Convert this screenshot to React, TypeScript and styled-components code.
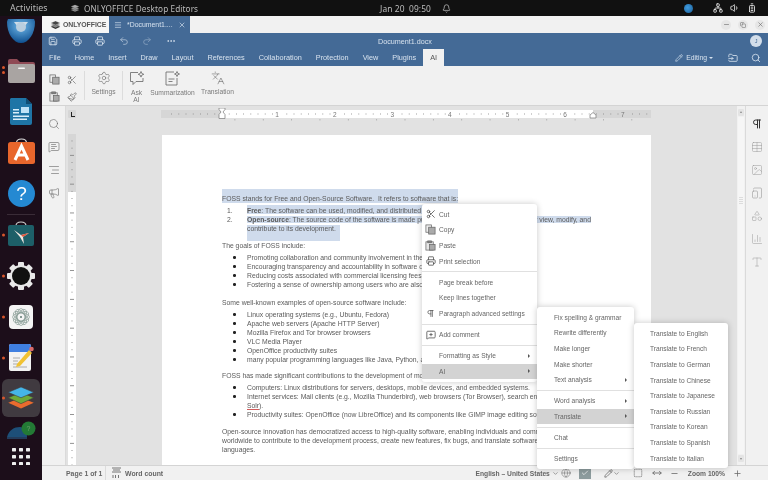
import React from "react";
import styled, { createGlobalStyle } from "styled-components";
import {
  Save, Printer, Undo2, Redo2, Ellipsis, Scissors, Paintbrush, Settings, Languages, Search,
  MessageSquareText, AlignRight, Megaphone, Pilcrow, Table, Image, TabletSmartphone, Shapes,
  BarChart3, Pencil, FolderInput, Minus, X, Plus, Copy, Bell, Menu as MenuIcon, Volume1,
  Network, BatteryFull, Globe, ChevronDown, Check, SquareDashed, MoveHorizontal, MessageSquarePlus, Type,
} from "lucide-react";

const Global = createGlobalStyle`
  html, body { margin: 0; padding: 0; background: #111; }
  * { box-sizing: border-box; }
  body { font-family: "Liberation Sans", Arial, sans-serif; }
`;

const Screen = styled.div`
  position: relative; width: 768px; height: 480px; overflow: hidden;
  display: flex; flex-direction: column; background: #f1f1f1; filter: blur(.35px);
`;
const TopBar = styled.header`
  height: 16px; flex: none; background: #111; color: #bcbcbc; display: flex; align-items: center;
  font-family: "Noto Sans", sans-serif; font-size: 8.4px; letter-spacing: .1px;
`;
const TopLeft = styled.div`width: 380px; display: flex; align-items: center; padding-left: 10px;`;
const Activities = styled.span`width: 60px; font-size: 8.8px;`;
const AppName = styled.span`margin-left: 4px; font-size: 8.2px;`;
const Clock = styled.span`white-space: pre; width: 62px;`;
const TopRight = styled.div`margin-left: auto; display: flex; align-items: center; gap: 7px; padding-right: 11px; color: #eee;`;
const Tray = styled.span`width: 9px; height: 9px; border-radius: 50%; background: radial-gradient(circle at 40% 40%, #3f9be0, #1c5f96); margin-right: 13px;`;
const Body = styled.div`flex: 1; display: flex; min-height: 0;`;

const Dock = styled.nav`width: 42px; flex: none; background: #1c0e1a; display: flex; flex-direction: column; align-items: center;`;
const Slot = styled.div<{ $h: number; $mb?: number; $active?: boolean }>`
  position: relative; flex: none; width: 42px; height: ${p => p.$h}px; margin-bottom: ${p => p.$mb || 0}px;
  display: flex; align-items: center; justify-content: center;
  &::before {
    content: ""; display: ${p => (p.$active ? "block" : "none")}; position: absolute; left: 2px; right: 2px; top: 0; bottom: 0;
    border-radius: 6px; background: #403a40;
  }
  & > svg { position: relative; }
`;
const Dots = styled.div`position: absolute; left: 2px; top: 50%; transform: translateY(-50%); display: flex; flex-direction: column; gap: 2px;`;
const Dot = styled.i`display: block; width: 3px; height: 3px; border-radius: 50%; background: #d9552b;`;
const DockRule = styled.div`width: 28px; height: 1px; background: #3a2c37; flex: none;`;

const Win = styled.main`flex: 1; min-width: 0; display: flex; flex-direction: column;`;
const TabStrip = styled.div`height: 17px; flex: none; display: flex; align-items: stretch; background: #f1f1f1;`;
const LogoTab = styled.div`
  width: 67px; background: #f6f6f6; display: flex; align-items: center; padding-left: 8px; gap: 2px;
  font-size: 6.9px; font-weight: 700; color: #555; letter-spacing: -.05px;
`;
const DocTab = styled.div`width: 81px; background: #446a96; color: #d5e1ee; display: flex; align-items: center; padding-left: 5px; font-size: 6.9px;`;
const DocName = styled.span`margin-left: 5px; width: 51px;`;
const WinBtns = styled.div`margin-left: auto; display: flex; align-items: center; gap: 7px; padding-right: 3px; color: #666;`;
const WinBtn = styled.span`width: 10px; height: 10px; border-radius: 50%; background: #e6e6e6; display: flex; align-items: center; justify-content: center;`;
const BlueRow = styled.div`
  height: 16px; flex: none; background: #446a96; position: relative; display: flex; align-items: center; padding-left: 6px; gap: 13.5px; color: #d7e2ee;
`;
const Title = styled.span`position: absolute; left: 0; right: 0; text-align: center; font-size: 7.2px; color: #d7e2ee;`;
const Avatar = styled.span`
  position: absolute; right: 6px; top: 2px; width: 12px; height: 12px; border-radius: 50%; background: #d3deea; color: #446a96;
  display: flex; align-items: center; justify-content: center; font-size: 5.5px;
`;
const MenuTabs = styled.div`height: 17px; flex: none; background: #446a96; display: flex; align-items: stretch;`;
const MenuTab = styled.span<{ $on?: boolean }>`
  padding: 0 7px; display: flex; align-items: center; font-size: 7.3px; color: ${p => (p.$on ? "#555" : "#d7e2ee")};
  background: ${p => (p.$on ? "#f1f1f1" : "transparent")};
`;
const TabsRight = styled.div`margin-left: auto; display: flex; align-items: center; color: #d7e2ee; font-size: 6.8px; padding-right: 7px;`;
const EditLabel = styled.span`margin-left: 3px; margin-right: 2px;`;
const Caret = styled.i`width: 0; height: 0; border: 2px solid transparent; border-top: 2.5px solid #d7e2ee; margin-top: 2px; margin-right: 15px;`;

const Toolbar = styled.div`height: 40px; flex: none; border-bottom: 1px solid #d4d4d4; display: flex; background: #f1f1f1; padding-top: 5px;`;
const ToolGrid = styled.div`
  display: grid; grid-template-columns: 18px 18px; grid-auto-rows: 17px; margin-left: 3px; width: 39px;
  justify-items: center; align-items: center; color: #555;
`;
const ToolSep = styled.div`width: 1px; height: 29px; margin-top: 0; background: #dcdcdc;`;
const BigTool = styled.div<{ $w: number }>`
  width: ${p => p.$w}px; display: flex; flex-direction: column; align-items: center; color: #666;
  font-size: 6.7px; line-height: 7px; text-align: center;
`;
const ToolLabel = styled.span`color: #7a7a7a; margin-top: 3px; white-space: nowrap;`;

const Workspace = styled.div`flex: 1; min-height: 0; display: flex;`;
const SidePanel = styled.aside<{ $right?: boolean }>`
  width: ${p => (p.$right ? 23 : 24)}px; flex: none; background: #f1f1f1; display: flex; flex-direction: column; align-items: center;
  padding-top: 12px; gap: 11px; color: #666; padding-right: ${p => (p.$right ? 1 : 0)}px;
  border-${p => (p.$right ? "left" : "right")}: 1px solid #dadada;
  & > svg { flex: none; }
`;
const Canvas = styled.div`flex: 1; min-width: 0; background: #e2e2e2; display: flex; overflow: hidden;`;
const VStrip = styled.div`width: 10px; padding-left: 2px; flex: none; display: flex; flex-direction: column;`;
const Corner = styled.div`
  margin-top: 4px; width: 8px; height: 8px; background: #d6d6d6; border-radius: 1px; position: relative; flex: none;
  &::after { content: ""; position: absolute; left: 2.5px; top: 2px; width: 3px; height: 4px; border-left: 1.5px solid #222; border-bottom: 1.5px solid #222; }
`;
const VRuler = styled.svg`margin-top: 16px; display: block; flex: none;`;
const PageArea = styled.div`flex: 1; min-width: 0; display: flex; flex-direction: column;`;
const HRuler = styled.svg`margin: 2px 0 0 85px; display: block; flex: none;`;
const Page = styled.article`
  margin: 13px 0 0 86px; width: 489px; flex: 1; background: #fff; padding: 59px 0 0 60px; overflow: hidden;
  font-size: 6.8px; line-height: 9px; color: #5a5a5a; white-space: pre;
`;
const Line = styled.div<{ $gap?: number; $hang?: boolean }>`
  height: 9px; margin-top: ${p => p.$gap || 0}px; margin-left: ${p => (p.$hang ? 25 : 0)}px;
`;
const Item = styled.div<{ $gap?: number }>`height: 9px; margin-top: ${p => p.$gap || 0}px; display: flex;`;
const ItemText = styled.div`height: 9px;`;
const Marker = styled.span`width: 25px; flex: none; padding-left: 5px;`;
const BulletMark = styled.span`width: 25px; flex: none; padding-left: 11px; display: flex; align-items: center;
  &::before { content: ""; width: 2.5px; height: 2.5px; border-radius: 50%; background: #222; }
`;
const Hl = styled.span<{ $t: number; $b: number; $r?: number }>`
  background: #cfdbec; padding: ${p => p.$t}px ${p => p.$r || 0}px ${p => p.$b}px 0;
`;
const Misspelt = styled.span`text-decoration: underline; text-decoration-color: #d25b5b;`;

const Scroll = styled.div`width: 8px; flex: none; background: #f1f1f1; padding: 3px 1px; display: flex; flex-direction: column; align-items: stretch;`;
const ScrollBtn = styled.div<{ $down?: boolean }>`
  height: 7px; flex: none; background: #e4e4e4; border-radius: 1px; position: relative;
  &::after { content: ""; position: absolute; left: 1.5px; ${p => (p.$down ? "top: 2.5px" : "top: .5px")}; border: 1.5px solid transparent;
    ${p => (p.$down ? "border-top: 2px solid #888" : "border-bottom: 2px solid #888")}; }
`;
const Track = styled.div`flex: 1; margin: 1px 0; background: #f6f6f6; display: flex; align-items: center; justify-content: center;`;
const Thumb = styled.div`width: 4px; height: 8px; margin-bottom: 170px; background: repeating-linear-gradient(#dcdcdc 0 1px, transparent 1px 2px);`;

const Status = styled.footer`
  height: 15px; flex: none; background: #f1f1f1; border-top: 1px solid #d4d4d4; display: flex; align-items: center;
  font-size: 6.9px; color: #666;
`;
const PageNo = styled.span`margin-left: 24px; width: 39px; font-weight: 700;`;
const StatusSep = styled.i`width: 1px; height: 14px; background: #dcdcdc; flex: none;`;
const WordIcon = styled.svg`margin-left: 6px; flex: none;`;
const WordLabel = styled.span`margin-left: 4px; font-weight: 700;`;
const Lang = styled.span`margin-left: auto; font-weight: 700; font-size: 6.7px; white-space: nowrap;`;
const StatusRight = styled.div`display: flex; align-items: center; color: #666; padding-right: 26px;`;
const SpellBox = styled.span`width: 12px; height: 11px; background: #8c9b9d; color: #fff; display: flex; align-items: center; justify-content: center; margin-left: 8px;`;
const ZoomText = styled.span`font-weight: 700; margin: 0 8px 0 9px; white-space: nowrap; font-size: 6.7px;`;

const Menu = styled.div<{ $x: number; $y: number; $w: number }>`
  position: absolute; left: ${p => p.$x}px; top: ${p => p.$y}px; width: ${p => p.$w}px; background: #fff; border-radius: 3px;
  box-shadow: 0 0 6px rgba(0, 0, 0, .22); padding: 2.5px 0; font-size: 6.6px; color: #666;
`;
const Row = styled.div<{ $on?: boolean; $pad?: number }>`
  height: 15.6px; display: flex; align-items: center; padding-left: ${p => p.$pad ?? 0}px; white-space: nowrap;
  background: ${p => (p.$on ? "#d3d3d3" : "transparent")};
`;
const RowIcon = styled.span`width: 17px; flex: none; display: flex; align-items: center; justify-content: center; color: #555;`;
const Arrow = styled.i`margin-left: auto; margin-right: 7px; width: 0; height: 0; border: 2px solid transparent; border-left: 2.5px solid #555; border-right: 0;`;
const MenuSep = styled.div`height: 1px; margin: 2.3px 0; background: #e0e0e0;`;

const PasteIcon = () => (
  <svg width="11" height="11" viewBox="0 0 12 12" fill="none" stroke="#666" strokeWidth=".8">
    <rect x="1" y="2" width="8" height="9" fill="#e6e6e6" /><rect x="3" y="1" width="4" height="2" fill="#888" />
    <rect x="5" y="5" width="6" height="6" fill="#aaa" />
  </svg>
);
const CopyIcon = () => (
  <svg width="11" height="11" viewBox="0 0 12 12" fill="none" stroke="#666" strokeWidth=".8">
    <rect x="1" y="1" width="6" height="8" fill="#eee" /><rect x="4" y="3.500" width="7" height="7.500" fill="#aaa" />
  </svg>
);

const Firefox = () => (
  <svg width="30" height="26" viewBox="0 0 30 26">
    <defs><radialGradient id="fx" cx=".5" cy=".3" r=".7"><stop offset="0" stopColor="#6fb8ea" /><stop offset="1" stopColor="#0e4f8f" /></radialGradient></defs>
    <path d="M1 3a14 21 0 0 0 28 0c0-1-1-3-1-3H2S1 2 1 3z" fill="url(#fx)" />
    <path d="M8 3l7 9 7-9z" fill="#cfdde8" /><circle cx="15" cy="8" r="5" fill="#b9cedf" />
  </svg>
);
const Files = () => (
  <svg width="27" height="25" viewBox="0 0 27 25">
    <path d="M0 3a2 2 0 0 1 2-2h7l3 3h13a2 2 0 0 1 2 2v5H0z" fill="#8f4a55" />
    <rect y="6" width="27" height="19" rx="2" fill="#a9a4a2" /><rect x="10" y="9.500" width="7" height="1.600" rx=".8" fill="#f5f5f5" />
  </svg>
);
const Writer = () => (
  <svg width="22" height="27" viewBox="0 0 22 27">
    <path d="M1 0h15l6 6v19a2 2 0 0 1-2 2H2a2 2 0 0 1-2-2V1z" fill="#1f75a6" /><path d="M16 0l6 6h-6z" fill="#0f4e74" />
    <rect x="3" y="11" width="6" height="1.500" fill="#d9eefa" /><rect x="3" y="14" width="6" height="1.500" fill="#d9eefa" /><rect x="11" y="9" width="8" height="6" fill="#bfe3f7" />
    <rect x="3" y="17.500" width="16" height="1.500" fill="#d9eefa" /><rect x="3" y="20.500" width="14" height="1.500" fill="#d9eefa" />
  </svg>
);
const Store = () => (
  <svg width="27" height="26" viewBox="0 0 27 26">
    <path d="M8.500 5C8.500 2 10.500 1 13.500 1s5 1 5 4" fill="none" stroke="#ddd" strokeWidth="1.200" />
    <rect y="4" width="27" height="22" rx="2.500" fill="#e8662c" />
    <path d="M7 22 13.500 8 20 22M9.500 17h8" fill="none" stroke="#fff" strokeWidth="3" />
  </svg>
);
const Help = () => (
  <svg width="27" height="27" viewBox="0 0 27 27">
    <circle cx="13.500" cy="13.500" r="13.500" fill="#2489d2" />
    <text x="13.500" y="20" textAnchor="middle" fontSize="19" fontFamily="Liberation Sans" fill="#fff">?</text>
  </svg>
);
const Teal = () => (
  <svg width="26" height="25" viewBox="0 0 26 25">
    <path d="M8 5C8 2 10 1 13 1s5 1 5 4" fill="none" stroke="#ccc" strokeWidth="1.200" />
    <rect y="4" width="26" height="21" rx="2" fill="#1d5f68" />
    <path d="M6 9l7 5 8-2-6 4 1 7-4-7z" fill="#f0e6e0" /><path d="M13 14l8-2-6 4z" fill="#e2553c" />
  </svg>
);
const Gear = () => (
  <svg width="28" height="28" viewBox="0 0 28 28">
    {[0, 45, 90, 135, 180, 225, 270, 315].map(a => (
      <rect key={a} x="11" y="0" width="6" height="5" rx="1" fill="#e8e8e8" transform={`rotate(${a} 14 14)`} />
    ))}
    <circle cx="14" cy="14" r="11" fill="#e8e8e8" /><circle cx="14" cy="14" r="9" fill="#111" />
  </svg>
);
const Atom = () => (
  <svg width="24" height="24" viewBox="0 0 24 24">
    <rect width="24" height="24" rx="4" fill="#f4f4f4" />
    {[0, 30, 60, 90, 120, 150].map(a => (
      <ellipse key={a} cx="12" cy="12" rx="8.500" ry="4" fill="none" stroke="#7d938c" strokeWidth=".6" transform={`rotate(${a} 12 12)`} />
    ))}
    <circle cx="12" cy="12" r="1" fill="#5f7a72" />
  </svg>
);
const Notes = () => (
  <svg width="25" height="27" viewBox="0 0 25 27">
    <rect width="22" height="27" rx="2" fill="#f2f2f2" /><path d="M0 2a2 2 0 0 1 2-2h18a2 2 0 0 1 2 2v6H0z" fill="#3f7fe0" />
    <path d="M4 23h14M4 20h5M4 17h5M4 14h7" stroke="#999" strokeWidth=".8" />
    <path d="M8 20 20 6l3 3L11 22l-4 1z" fill="#f1c232" /><circle cx="22.500" cy="5" r="2.300" fill="#d96a6a" />
  </svg>
);
const OOLogo = ({ size = 30, mono }: { size?: number; mono?: boolean }) => (
  <svg width={size} height={size * .85} viewBox="0 0 30 26">
    <path d="M2 18 15 13l13 5-13 6z" fill={mono ? "#888" : "#e96b2e"} />
    <path d="M2 13 15 7.500 28 13l-13 6z" fill={mono ? "#999" : "#6eaa3a"} stroke={mono ? "#111" : "#403a40"} strokeWidth=".6" />
    <path d="M2 7.500 15 2l13 5.500L15 13z" fill={mono ? "#aaa" : "#45b5e8"} stroke={mono ? "#111" : "#403a40"} strokeWidth=".6" />
  </svg>
);
const TabLogo = () => (
  <svg width="11" height="10" viewBox="0 0 30 26">
    <path d="M2 18 15 13l13 5-13 6z" fill="#333" />
    <path d="M2 13 15 7.500 28 13l-13 6z" fill="#777" stroke="#fff" strokeWidth=".8" />
    <path d="M2 7.500 15 2l13 5.500L15 13z" fill="#444" stroke="#fff" strokeWidth=".8" />
  </svg>
);
const Hidden = () => (
  <svg width="30" height="18" viewBox="0 0 30 18">
    <path d="M1 16C3 9 8 6 14 6c4 0 7 4 7 10z" fill="#1d4f78" /><path d="M1 17h20" stroke="#2a6b9c" />
    <circle cx="22.500" cy="7.500" r="7" fill="#237a35" />
    <text x="22.500" y="10" textAnchor="middle" fontSize="7" fontFamily="Liberation Sans" fill="#6fa06f">?</text>
  </svg>
);
const Grid9 = () => (
  <svg width="18" height="17" viewBox="0 0 18 17" fill="#eee">
    {[0, 7, 14].flatMap(y => [0, 7, 14].map(x => <rect key={`${x}-${y}`} x={x} y={y} width="4" height="3.400" rx=".6" />))}
  </svg>
);
const AskAi = () => (
  <svg width="16" height="15" viewBox="0 0 16 15" fill="none" stroke="#666" strokeWidth=".8">
    <path d="M9 1.500H1.500v9H4v3l3-3h7V7" /><path d="M12 .5l.8 2 2 .8-2 .8-.8 2-.8-2-2-.8 2-.8z" />
  </svg>
);
const Summary = () => (
  <svg width="15" height="15" viewBox="0 0 15 15" fill="none" stroke="#666" strokeWidth=".8">
    <path d="M9 1H1v13h11V7" /><path d="M3.500 8h6M3.500 10.500h4" /><path d="M12 .5l.7 1.800 1.800.7-1.800.7-.7 1.800-.7-1.800L9.500 3l1.800-.7z" />
  </svg>
);

const rulerTicks = Array.from({ length: 68 }, (_, i) => 3 + i * 7.2);
const stopTicks = Array.from({ length: 16 }, (_, i) => 73.5 + i * 28.35);
const HorizontalRuler = () => (
  <HRuler width="490" height="14" viewBox="0 0 490 14">
    <rect y="2" width="490" height="8" fill="#d6d6d6" /><rect x="61" y="2" width="371" height="8" fill="#fff" />
    {rulerTicks.filter((_, i) => i % 8 !== 0).map(x => <rect key={x} x={x} y="5.500" width=".8" height={1} fill="#888" />)}
    {[1, 2, 3, 4, 5, 6, 7].map(n => (
      <text key={n} x={58.5 + n * 57.6} y="8.500" textAnchor="middle" fontSize="6.500" fontFamily="Liberation Sans" fill="#777">{n}</text>
    ))}
    {stopTicks.map(x => <rect key={x} x={x} y="11" width=".8" height="1.500" fill="#aaa" />)}
    <path d="M58 0h6v1.500l-2 2.500 2 2.500v4h-6v-4l2-2.500-2-2.500z" fill="#fff" stroke="#777" strokeWidth=".7" />
    <path d="M429 7l3-2.500 3 2.500v3h-6z" fill="#fff" stroke="#777" strokeWidth=".7" />
  </HRuler>
);
const VerticalRuler = () => (
  <VRuler width="8" height="331" viewBox="0 0 8 331">
    <rect width="8" height="58" fill="#d6d6d6" /><rect y="58" width="8" height="273" fill="#fff" />
    {Array.from({ length: 46 }, (_, i) => 6.5 + i * 7.2).map((y, i) =>
      i % 4 === 2 ? <rect key={y} x="2" y={y} width="4" height=".9" fill="#888" /> : <rect key={y} x="3.500" y={y} width="1" height=".9" fill="#888" />
    )}
  </VRuler>
);

const dockTail = [
  { h: 42, c: <Gear /> },
  { h: 39, c: <Atom /> },
  { h: 43, c: <Notes /> },
];
const tabs = ["File", "Home", "Insert", "Draw", "Layout", "References", "Collaboration", "Protection", "View", "Plugins"];
const trans = ["English", "French", "German", "Chinese", "Japanese", "Russian", "Korean", "Spanish", "Italian"];

const goals = [
  "Promoting collaboration and community involvement in the development of software.",
  "Encouraging transparency and accountability in software development.",
  "Reducing costs associated with commercial licensing fees.",
  "Fostering a sense of ownership among users who are also contributors.",
];
const examples = [
  "Linux operating systems (e.g., Ubuntu, Fedora)",
  "Apache web servers (Apache HTTP Server)",
  "Mozilla Firefox and Tor browser browsers",
  "VLC Media Player",
  "OpenOffice productivity suites",
  "many popular programming languages like Java, Python, and others.",
];

export default function App() {
  return (
    <Screen>
      <Global />
      <TopBar>
        <TopLeft>
          <Activities>Activities</Activities>
          <OOLogo size={10} mono />
          <AppName>ONLYOFFICE Desktop Editors</AppName>
        </TopLeft>
        <Clock>{"Jan 20  09:50"}</Clock>
        <Bell size={9} />
        <TopRight>
          <Tray />
          <Network size={10} /><Volume1 size={10} /><BatteryFull size={10} style={{ transform: "rotate(-90deg)" }} />
        </TopRight>
      </TopBar>
      <Body>
        <Dock>
          <Slot $h={31}><Firefox /></Slot>
          <Slot $h={46}><Dots><Dot /><Dot /></Dots><Files /></Slot>
          <Slot $h={36}><Writer /></Slot>
          <Slot $h={43}><Store /></Slot>
          <Slot $h={42}><Help /></Slot>
          <DockRule />
          <Slot $h={36} $mb={4}><Dots style={{ marginTop: 2 }}><Dot /></Dots><Teal /></Slot>
          {dockTail.map((d, i) => <Slot key={i} $h={d.h}><Dots><Dot /></Dots>{d.c}</Slot>)}
          <Slot $h={38} $active><Dots><Dot /></Dots><OOLogo size={30} /></Slot>
          <Slot $h={26}><Hidden /></Slot>
          <Slot $h={26}><Grid9 /></Slot>
        </Dock>
        <Win>
          <TabStrip>
            <LogoTab><TabLogo />ONLYOFFICE</LogoTab>
            <DocTab><MenuIcon size={8} /><DocName>*Document1....</DocName><X size={8} /></DocTab>
            <WinBtns>
              <WinBtn><Minus size={7} /></WinBtn><WinBtn><Copy size={6} /></WinBtn><WinBtn><X size={7} /></WinBtn>
            </WinBtns>
          </TabStrip>
          <BlueRow>
            <Title>Document1.docx</Title>
            <Save size={10} /><Printer size={10} /><Printer size={10} />
            <Undo2 size={10} opacity={.7} /><Redo2 size={10} opacity={.45} /><Ellipsis size={10} />
            <Avatar>J</Avatar>
          </BlueRow>
          <MenuTabs>
            {tabs.map(t => <MenuTab key={t}>{t}</MenuTab>)}
            <MenuTab $on>AI</MenuTab>
            <TabsRight>
              <Pencil size={8} /><EditLabel>Editing</EditLabel><Caret />
              <FolderInput size={10} style={{ marginRight: 13 }} /><Search size={10} />
            </TabsRight>
          </MenuTabs>
          <Toolbar>
            <ToolGrid><CopyIcon /><Scissors size={10} strokeWidth={1.4} /><PasteIcon /><Paintbrush size={10} strokeWidth={1.4} /></ToolGrid>
            <ToolSep />
            <BigTool $w={37}><Settings size={14} strokeWidth={1} /><ToolLabel>Settings</ToolLabel></BigTool>
            <ToolSep />
            <BigTool $w={27}><AskAi /><ToolLabel>Ask<br />AI</ToolLabel></BigTool>
            <BigTool $w={45}><Summary /><ToolLabel>Summarization</ToolLabel></BigTool>
            <BigTool $w={45}><Languages size={14} strokeWidth={1} /><ToolLabel>Translation</ToolLabel></BigTool>
          </Toolbar>
          <Workspace>
            <SidePanel>
              <Search size={12} strokeWidth={1.2} /><MessageSquareText size={12} strokeWidth={1.2} />
              <AlignRight size={12} strokeWidth={1.2} /><Megaphone size={12} strokeWidth={1.2} />
            </SidePanel>
            <Canvas>
              <VStrip><Corner /><VerticalRuler /></VStrip>
              <PageArea>
                <HorizontalRuler />
                <Page>
                  <Line><Hl $t={6} $b={1}>FOSS stands for Free and Open-Source Software.  It refers to software that is:</Hl></Line>
                  <Item $gap={3}><Marker>1.</Marker><ItemText><Hl $t={2} $b={0}><b>Free</b>: The software can be used, modified, and distributed by anyone for any purpose.</Hl></ItemText></Item>
                  <Item><Marker>2.</Marker><ItemText><Hl $t={0} $b={0}><b>Open-source</b>: The source code of the software is made publicly available for anyone to securely view, modify, and</Hl></ItemText></Item>
                  <Line $hang><Hl $t={0} $b={9} $r={4}>contribute to its development.</Hl></Line>
                  <Line $gap={8}>The goals of FOSS include:</Line>
                  {goals.map((g, i) => <Item key={g} $gap={i ? 0 : 3}><BulletMark />{g}</Item>)}
                  <Line $gap={9}>Some well-known examples of open-source software include:</Line>
                  {examples.map((g, i) => <Item key={g} $gap={i ? 0 : 3}><BulletMark />{g}</Item>)}
                  <Line $gap={7}>FOSS has made significant contributions to the development of modern technology:</Line>
                  <Item $gap={3}><BulletMark />Computers: Linux distributions for servers, desktops, mobile devices, and embedded systems.</Item>
                  <Item><BulletMark />Internet services: Mail clients (e.g., Mozilla Thunderbird), web browsers (Tor Browser), search engines</Item>
                  <Line $hang><Misspelt>Solr</Misspelt>).</Line>
                  <Item><BulletMark />Productivity suites: OpenOffice (now LibreOffice) and its components like GIMP image editing software.</Item>
                  <Line $gap={8}>Open-source innovation has democratized access to high-quality software, enabling individuals and communities</Line>
                  <Line>worldwide to contribute to the development process, create new features, fix bugs, and translate software into many</Line>
                  <Line>languages.</Line>
                </Page>
              </PageArea>
            </Canvas>
            <Scroll>
              <ScrollBtn /><Track><Thumb /></Track><ScrollBtn $down />
            </Scroll>
            <SidePanel $right>
              <Pilcrow size={12} color="#333" /><Table size={12} strokeWidth={1} color="#999" /><Image size={12} strokeWidth={1} color="#999" />
              <TabletSmartphone size={12} strokeWidth={1} color="#888" /><Shapes size={12} strokeWidth={1} color="#999" />
              <BarChart3 size={12} strokeWidth={1} color="#999" /><Type size={12} strokeWidth={1} color="#999" />
            </SidePanel>
          </Workspace>
          <Status>
            <PageNo>Page 1 of 1</PageNo>
            <StatusSep />
            <WordIcon width="9" height="12" viewBox="0 0 9 12" fill="none" stroke="#555" strokeWidth=".8"><path d="M0 1h9M1 3h7M0 5h9" /><path d="M1 8v3M3.500 8v3M6.500 8v3" /></WordIcon>
            <WordLabel>Word count</WordLabel>
            <Lang>English – United States</Lang>
            <StatusRight>
              <ChevronDown size={7} style={{ marginLeft: 2 }} />
              <Globe size={10} strokeWidth={1.2} style={{ marginLeft: 2 }} />
              <SpellBox><Check size={8} /></SpellBox>
              <Pencil size={9} style={{ marginLeft: 13 }} /><ChevronDown size={7} style={{ marginRight: 13 }} />
              <SquareDashed size={10} style={{ marginRight: 9 }} /><MoveHorizontal size={10} style={{ marginRight: 8 }} />
              <Minus size={9} /><ZoomText>Zoom 100%</ZoomText><Plus size={9} />
            </StatusRight>
          </Status>
        </Win>
      </Body>

      <Menu $x={422} $y={204} $w={115}>
        <Row><RowIcon><Scissors size={10} /></RowIcon>Cut</Row>
        <Row><RowIcon><CopyIcon /></RowIcon>Copy</Row>
        <Row><RowIcon><PasteIcon /></RowIcon>Paste</Row>
        <Row><RowIcon><Printer size={10} /></RowIcon>Print selection</Row>
        <MenuSep />
        <Row $pad={17}>Page break before</Row>
        <Row $pad={17}>Keep lines together</Row>
        <Row><RowIcon><Pilcrow size={9} /></RowIcon>Paragraph advanced settings</Row>
        <MenuSep />
        <Row><RowIcon><MessageSquarePlus size={10} /></RowIcon>Add comment</Row>
        <MenuSep />
        <Row $pad={17}>Formatting as Style<Arrow /></Row>
        <Row $pad={17} $on>AI<Arrow /></Row>
      </Menu>
      <Menu $x={537} $y={307} $w={97}>
        <Row $pad={17}>Fix spelling &amp; grammar</Row>
        <Row $pad={17}>Rewrite differently</Row>
        <Row $pad={17}>Make longer</Row>
        <Row $pad={17}>Make shorter</Row>
        <Row $pad={17}>Text analysis<Arrow /></Row>
        <MenuSep />
        <Row $pad={17}>Word analysis<Arrow /></Row>
        <Row $pad={17} $on>Translate<Arrow /></Row>
        <MenuSep />
        <Row $pad={17}>Chat</Row>
        <MenuSep />
        <Row $pad={17}>Settings</Row>
      </Menu>
      <Menu $x={634} $y={323} $w={94}>
        {trans.map(t => <Row key={t} $pad={16}>Translate to {t}</Row>)}
      </Menu>
    </Screen>
  );
}
